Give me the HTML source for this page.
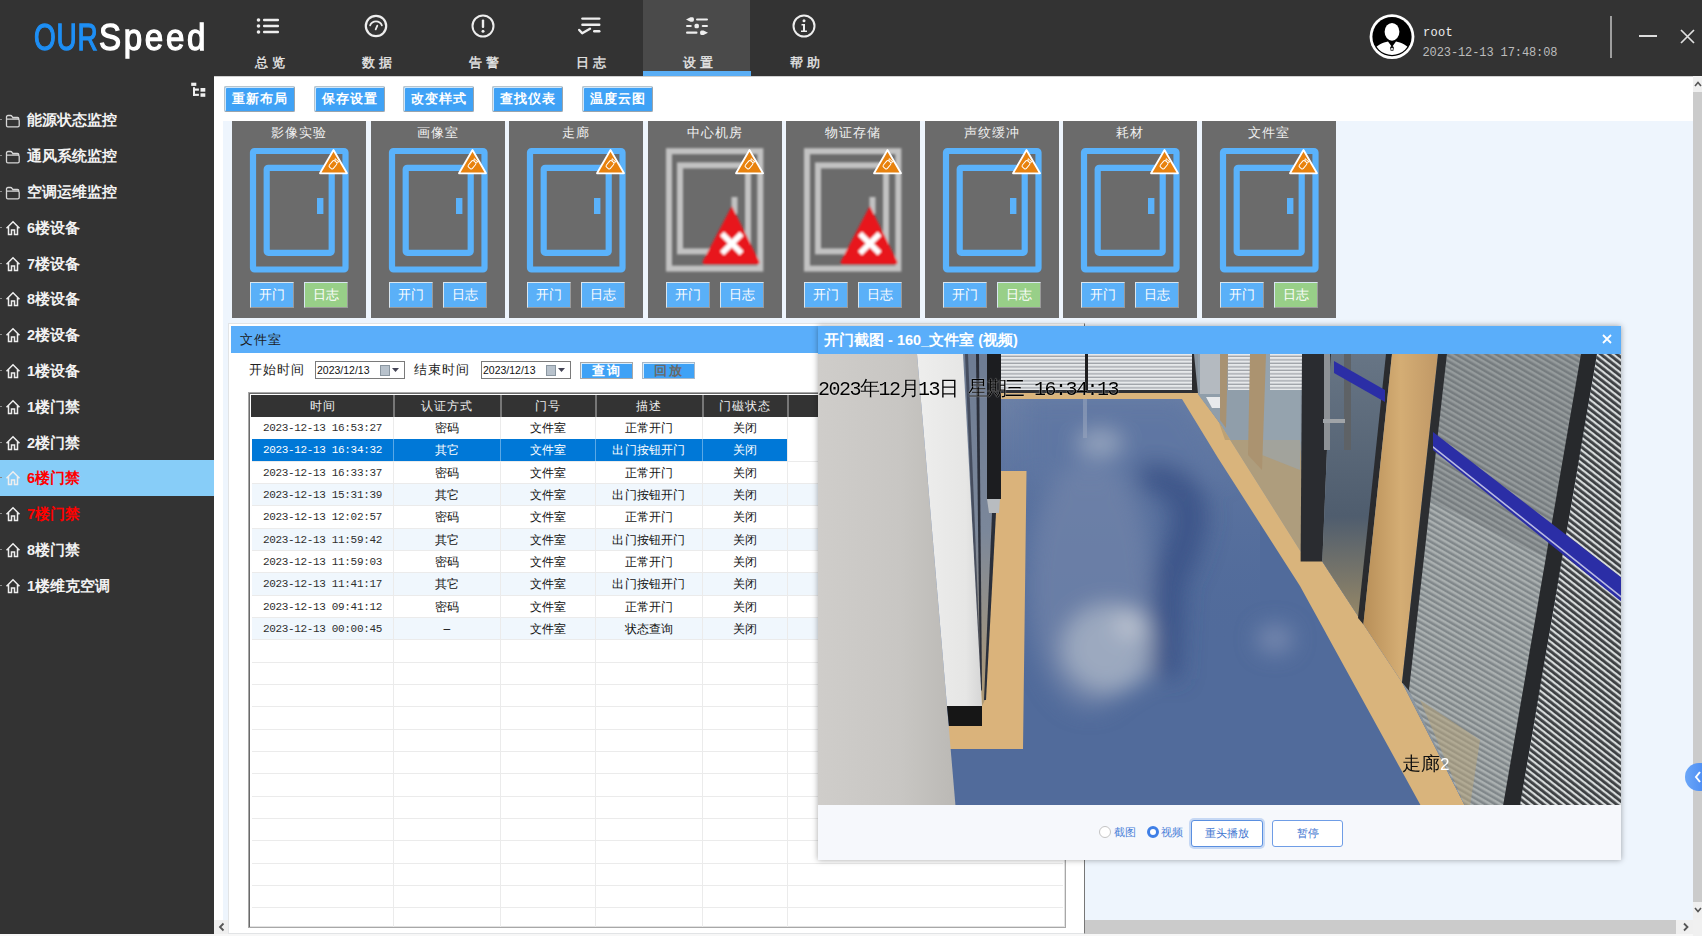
<!DOCTYPE html>
<html><head><meta charset="utf-8"><title>OURSpeed</title>
<style>
*{margin:0;padding:0;box-sizing:border-box}
html,body{width:1702px;height:936px;overflow:hidden;background:#fff;font-family:"Liberation Sans",sans-serif}
.ab{position:absolute}
.tab{position:absolute;top:0;width:107px;height:76px;color:#e8e8e8}
.tab .lb{position:absolute;left:0;width:107px;top:54.8px;text-align:center;font-size:13px;letter-spacing:4px;text-indent:4px;font-weight:normal;line-height:16px;-webkit-text-stroke:0.35px #e8e8e8}
.tab svg{position:absolute;left:40.3px;top:13px}
.side{position:absolute;left:0;width:214px;height:36px;color:#f2f2f2;font-size:14.5px;font-weight:bold;line-height:37px}
.side .tx{position:absolute;left:27px;top:0}
.tb{position:absolute;top:86px;width:71px;height:26px;background:#3fa2f6;border:1px solid #b8c4cc;border-right-color:#9aa4ac;border-bottom-color:#9aa4ac;box-shadow:inset 1px 1px 0 #cfe6fa;border-radius:2px;color:#fff;font-size:13px;font-weight:bold;text-align:center;line-height:24px;letter-spacing:1px}
.card{position:absolute;top:121px;width:134px;height:196.5px;background:#6b6b6b}
.card .ct{position:absolute;left:0;top:3.5px;width:134px;text-align:center;color:#f0f0f0;font-size:13px;letter-spacing:1px;line-height:16px}
.card svg{position:absolute;left:0;top:0}
.cb{position:absolute;top:161px;width:44px;height:26px;color:#fff;font-size:13px;line-height:24px;text-align:center;border:1px solid #d8e6f0;border-right-color:#9a9a9a;border-bottom-color:#9a9a9a}
.hd{position:absolute;top:395px;height:22px;color:#eee;font-size:12px;line-height:22px;text-align:center;letter-spacing:1px}
.row{position:absolute;left:252px;width:808px;height:22.33px}
.cell{position:absolute;top:0;height:22.33px;line-height:22px;text-align:center;font-size:12px;color:#111;letter-spacing:0.2px}
.mono{font-family:"Liberation Mono",monospace;letter-spacing:-0.35px;font-size:11px;color:#333}
</style></head><body>

<div class="ab" style="left:0;top:0;width:1702px;height:76px;background:#333"></div>
<div class="ab" style="left:34px;top:16.5px;font-size:37px;line-height:41px;white-space:nowrap;transform:scaleX(0.755);transform-origin:0 0;letter-spacing:1px;-webkit-text-stroke:1.3px currentColor;color:#1e8ff5">OUR</div>
<div class="ab" style="left:98.5px;top:16.5px;font-size:37px;line-height:41px;white-space:nowrap;transform:scaleX(0.895);transform-origin:0 0;letter-spacing:3px;-webkit-text-stroke:1.3px currentColor;color:#fff">Speed</div>
<div class="tab" style="left:216px;"><svg width="26" height="26" viewBox="0 0 26 26" style="margin-left:-1.5px;margin-top:2px"><g fill="#eee"><circle cx="3.5" cy="5" r="1.8"/><circle cx="3.5" cy="11" r="1.8"/><circle cx="3.5" cy="17" r="1.8"/><rect x="8" y="3.8" width="16" height="2.4" rx="1"/><rect x="8" y="9.8" width="16" height="2.4" rx="1"/><rect x="8" y="15.8" width="16" height="2.4" rx="1"/></g></svg><div class="lb">总览</div></div>
<div class="tab" style="left:323px;"><svg width="26" height="26" viewBox="0 0 26 26"><circle cx="13" cy="13" r="10.2" fill="none" stroke="#eee" stroke-width="2.2"/><path d="M7.1 12.4 A6.3 6.3 0 0 1 18.9 12.4" fill="none" stroke="#eee" stroke-width="1.7" stroke-linecap="round"/><path d="M14.3 12.6 L12.7 16.4" stroke="#eee" stroke-width="1.8" stroke-linecap="round"/></svg><div class="lb">数据</div></div>
<div class="tab" style="left:430px;"><svg width="26" height="26" viewBox="0 0 26 26"><circle cx="13" cy="13" r="10.5" fill="none" stroke="#eee" stroke-width="2"/><rect x="11.8" y="6.5" width="2.4" height="8.5" rx="1" fill="#eee"/><circle cx="13" cy="18.3" r="1.5" fill="#eee"/></svg><div class="lb">告警</div></div>
<div class="tab" style="left:537px;"><svg width="26" height="26" viewBox="0 0 26 26" style="margin-top:-1px"><g fill="#eee"><rect x="4.2" y="5.4" width="19.3" height="2.4" rx="1.2"/><rect x="4.2" y="11.5" width="19.3" height="2.4" rx="1.2"/><rect x="16" y="18.1" width="7.5" height="2.4" rx="1.2"/></g><path d="M2.2 18 L5.2 21.3 L13 16.8" fill="none" stroke="#eee" stroke-width="2.4" stroke-linecap="round" stroke-linejoin="round"/></svg><div class="lb">日志</div></div>
<div class="tab" style="left:644px;background:#4a4a4a;border-left:1px solid #4a4a4a;margin-left:-1px;"><svg width="26" height="26" viewBox="0 0 26 26"><g fill="#eee"><path d="M2 6.5 L6.5 4.3 L8.5 4.3 Q10 4.3 10 6.5 Q10 8.7 8.5 8.7 L6.5 8.7 Z"/><rect x="12" y="5.4" width="12" height="2.2" rx="1.1"/><rect x="2" y="11.9" width="5.8" height="2.2" rx="1.1"/><rect x="10.5" y="10.8" width="4.4" height="4.4" rx="1.5"/><rect x="17.7" y="11.9" width="6.3" height="2.2" rx="1.1"/><rect x="2" y="18.6" width="11.5" height="2.2" rx="1.1"/><path d="M24 19.7 L19.5 21.9 L17.5 21.9 Q16 21.9 16 19.7 Q16 17.5 17.5 17.5 L19.5 17.5 Z"/></g></svg><div class="lb">设置</div></div>
<div class="tab" style="left:751px;"><svg width="26" height="26" viewBox="0 0 26 26"><circle cx="13" cy="13" r="10.5" fill="none" stroke="#eee" stroke-width="2"/><circle cx="13" cy="7.8" r="1.5" fill="#eee"/><path d="M10.5 11 H14 V17.5 H16 V19 H10 V17.5 H12 V12.5 H10.5 Z" fill="#eee"/></svg><div class="lb">帮助</div></div>
<div class="ab" style="left:643px;top:71px;width:108px;height:5px;background:#5aaef5"></div>
<svg class="ab" style="left:1369px;top:14px" width="46" height="46" viewBox="0 0 46 46">
<circle cx="23" cy="22.7" r="22.4" fill="#fff"/><circle cx="23" cy="22.7" r="19.6" fill="#000"/>
<clipPath id="uc"><circle cx="23" cy="22.7" r="18.3"/></clipPath>
<g clip-path="url(#uc)" fill="#fff">
<ellipse cx="23" cy="17.8" rx="7.4" ry="8.9"/>
<path d="M4 46 L4 36 C8 31 14 28.5 19 27.5 L23 33 L27 27.5 C32 28.5 38 31 42 36 L42 46 Z"/>
</g>
<path d="M21.3 34.5 A1.8 1.8 0 1 1 24.7 34.5 L24.2 37 L21.8 37 Z" fill="#000"/>
<path d="M22.2 34.6 A0.8 0.8 0 1 1 23.8 34.6 L23.6 36.5 L22.4 36.5 Z" fill="#fff"/>
</svg>
<div class="ab mono" style="left:1423px;top:26px;font-size:12px;color:#eee;letter-spacing:0.3px">root</div>
<div class="ab mono" style="left:1422.5px;top:45.5px;font-size:12px;color:#bcbcbc;letter-spacing:-0.1px">2023-12-13 17:48:08</div>
<div class="ab" style="left:1610px;top:15.5px;width:2.2px;height:42px;background:#9e9e9e"></div>
<div class="ab" style="left:1639px;top:35px;width:18px;height:2px;background:#ddd"></div>
<svg class="ab" style="left:1680px;top:29px" width="15" height="15" viewBox="0 0 15 15"><path d="M1 1 L14 14 M14 1 L1 14" stroke="#e0e0e0" stroke-width="1.7"/></svg>
<div class="ab" style="left:214px;top:76px;width:1479px;height:1px;background:linear-gradient(#b8b8b8,#e8e8e8)"></div>
<div class="ab" style="left:0;top:76px;width:214px;height:858px;background:#333"></div>
<svg class="ab" style="left:190px;top:82px" width="17" height="17" viewBox="0 0 17 17"><g fill="#f0f0f0"><rect x="1.2" y="0.7" width="5.1" height="3.2"/><rect x="3" y="5.2" width="2" height="8.7"/><rect x="3" y="6.5" width="5.9" height="2.2"/><rect x="3" y="11.8" width="5.9" height="2.1"/><rect x="10.5" y="6" width="4.8" height="3.7"/><rect x="10.5" y="11.3" width="4.8" height="3.5"/></g></svg>
<div class="side" style="top:102.3px;"><div class="ab" style="left:0;top:17px;width:2px;height:1px;background:#888"></div><div class="ab" style="left:5px;top:12px;line-height:0"><svg width="16" height="14" viewBox="0 0 16 14"><path d="M1.5 3 Q1.5 1.5 3 1.5 H5.5 Q6.5 1.5 7.2 2.6 L7.8 3.5 H12.5 Q13.8 3.5 13.8 4.8 V5.2 M1.5 3 V11.5 Q1.5 12.8 2.8 12.8 H12.8 Q14.2 12.8 14.2 11.5 V6.5 Q14.2 5.2 12.8 5.2 H1.5" fill="none" stroke="#d6d6d6" stroke-width="1.3"/></svg></div><div class="tx">能源状态监控</div></div>
<div class="side" style="top:138.1px;"><div class="ab" style="left:0;top:17px;width:2px;height:1px;background:#888"></div><div class="ab" style="left:5px;top:12px;line-height:0"><svg width="16" height="14" viewBox="0 0 16 14"><path d="M1.5 3 Q1.5 1.5 3 1.5 H5.5 Q6.5 1.5 7.2 2.6 L7.8 3.5 H12.5 Q13.8 3.5 13.8 4.8 V5.2 M1.5 3 V11.5 Q1.5 12.8 2.8 12.8 H12.8 Q14.2 12.8 14.2 11.5 V6.5 Q14.2 5.2 12.8 5.2 H1.5" fill="none" stroke="#d6d6d6" stroke-width="1.3"/></svg></div><div class="tx">通风系统监控</div></div>
<div class="side" style="top:173.9px;"><div class="ab" style="left:0;top:17px;width:2px;height:1px;background:#888"></div><div class="ab" style="left:5px;top:12px;line-height:0"><svg width="16" height="14" viewBox="0 0 16 14"><path d="M1.5 3 Q1.5 1.5 3 1.5 H5.5 Q6.5 1.5 7.2 2.6 L7.8 3.5 H12.5 Q13.8 3.5 13.8 4.8 V5.2 M1.5 3 V11.5 Q1.5 12.8 2.8 12.8 H12.8 Q14.2 12.8 14.2 11.5 V6.5 Q14.2 5.2 12.8 5.2 H1.5" fill="none" stroke="#d6d6d6" stroke-width="1.3"/></svg></div><div class="tx">空调运维监控</div></div>
<div class="side" style="top:209.7px;"><div class="ab" style="left:0;top:17px;width:2px;height:1px;background:#888"></div><div class="ab" style="left:5px;top:10px;line-height:0"><svg width="16" height="16" viewBox="0 0 16 16"><path d="M1.5 8.2 L8 1.8 L14.5 8.2 M3.5 6.5 V14.5 H6.5 V10 H9.5 V14.5 H12.5 V6.5" fill="none" stroke="#eee" stroke-width="1.5" stroke-linejoin="miter"/></svg></div><div class="tx">6楼设备</div></div>
<div class="side" style="top:245.5px;"><div class="ab" style="left:0;top:17px;width:2px;height:1px;background:#888"></div><div class="ab" style="left:5px;top:10px;line-height:0"><svg width="16" height="16" viewBox="0 0 16 16"><path d="M1.5 8.2 L8 1.8 L14.5 8.2 M3.5 6.5 V14.5 H6.5 V10 H9.5 V14.5 H12.5 V6.5" fill="none" stroke="#eee" stroke-width="1.5" stroke-linejoin="miter"/></svg></div><div class="tx">7楼设备</div></div>
<div class="side" style="top:281.3px;"><div class="ab" style="left:0;top:17px;width:2px;height:1px;background:#888"></div><div class="ab" style="left:5px;top:10px;line-height:0"><svg width="16" height="16" viewBox="0 0 16 16"><path d="M1.5 8.2 L8 1.8 L14.5 8.2 M3.5 6.5 V14.5 H6.5 V10 H9.5 V14.5 H12.5 V6.5" fill="none" stroke="#eee" stroke-width="1.5" stroke-linejoin="miter"/></svg></div><div class="tx">8楼设备</div></div>
<div class="side" style="top:317.1px;"><div class="ab" style="left:0;top:17px;width:2px;height:1px;background:#888"></div><div class="ab" style="left:5px;top:10px;line-height:0"><svg width="16" height="16" viewBox="0 0 16 16"><path d="M1.5 8.2 L8 1.8 L14.5 8.2 M3.5 6.5 V14.5 H6.5 V10 H9.5 V14.5 H12.5 V6.5" fill="none" stroke="#eee" stroke-width="1.5" stroke-linejoin="miter"/></svg></div><div class="tx">2楼设备</div></div>
<div class="side" style="top:352.9px;"><div class="ab" style="left:0;top:17px;width:2px;height:1px;background:#888"></div><div class="ab" style="left:5px;top:10px;line-height:0"><svg width="16" height="16" viewBox="0 0 16 16"><path d="M1.5 8.2 L8 1.8 L14.5 8.2 M3.5 6.5 V14.5 H6.5 V10 H9.5 V14.5 H12.5 V6.5" fill="none" stroke="#eee" stroke-width="1.5" stroke-linejoin="miter"/></svg></div><div class="tx">1楼设备</div></div>
<div class="side" style="top:388.7px;"><div class="ab" style="left:0;top:17px;width:2px;height:1px;background:#888"></div><div class="ab" style="left:5px;top:10px;line-height:0"><svg width="16" height="16" viewBox="0 0 16 16"><path d="M1.5 8.2 L8 1.8 L14.5 8.2 M3.5 6.5 V14.5 H6.5 V10 H9.5 V14.5 H12.5 V6.5" fill="none" stroke="#eee" stroke-width="1.5" stroke-linejoin="miter"/></svg></div><div class="tx">1楼门禁</div></div>
<div class="side" style="top:424.5px;"><div class="ab" style="left:0;top:17px;width:2px;height:1px;background:#888"></div><div class="ab" style="left:5px;top:10px;line-height:0"><svg width="16" height="16" viewBox="0 0 16 16"><path d="M1.5 8.2 L8 1.8 L14.5 8.2 M3.5 6.5 V14.5 H6.5 V10 H9.5 V14.5 H12.5 V6.5" fill="none" stroke="#eee" stroke-width="1.5" stroke-linejoin="miter"/></svg></div><div class="tx">2楼门禁</div></div>
<div class="side" style="top:460.3px;background:#87cdf8;color:#ff0000;"><div class="ab" style="left:0;top:17px;width:2px;height:1px;background:#888"></div><div class="ab" style="left:5px;top:10px;line-height:0"><svg width="16" height="16" viewBox="0 0 16 16"><path d="M1.5 8.2 L8 1.8 L14.5 8.2 M3.5 6.5 V14.5 H6.5 V10 H9.5 V14.5 H12.5 V6.5" fill="none" stroke="#eee" stroke-width="1.5" stroke-linejoin="miter"/></svg></div><div class="tx">6楼门禁</div></div>
<div class="side" style="top:496.1px;color:#ff0000;"><div class="ab" style="left:0;top:17px;width:2px;height:1px;background:#888"></div><div class="ab" style="left:5px;top:10px;line-height:0"><svg width="16" height="16" viewBox="0 0 16 16"><path d="M1.5 8.2 L8 1.8 L14.5 8.2 M3.5 6.5 V14.5 H6.5 V10 H9.5 V14.5 H12.5 V6.5" fill="none" stroke="#eee" stroke-width="1.5" stroke-linejoin="miter"/></svg></div><div class="tx">7楼门禁</div></div>
<div class="side" style="top:531.9px;"><div class="ab" style="left:0;top:17px;width:2px;height:1px;background:#888"></div><div class="ab" style="left:5px;top:10px;line-height:0"><svg width="16" height="16" viewBox="0 0 16 16"><path d="M1.5 8.2 L8 1.8 L14.5 8.2 M3.5 6.5 V14.5 H6.5 V10 H9.5 V14.5 H12.5 V6.5" fill="none" stroke="#eee" stroke-width="1.5" stroke-linejoin="miter"/></svg></div><div class="tx">8楼门禁</div></div>
<div class="side" style="top:567.7px;"><div class="ab" style="left:0;top:17px;width:2px;height:1px;background:#888"></div><div class="ab" style="left:5px;top:10px;line-height:0"><svg width="16" height="16" viewBox="0 0 16 16"><path d="M1.5 8.2 L8 1.8 L14.5 8.2 M3.5 6.5 V14.5 H6.5 V10 H9.5 V14.5 H12.5 V6.5" fill="none" stroke="#eee" stroke-width="1.5" stroke-linejoin="miter"/></svg></div><div class="tx">1楼维克空调</div></div>
<div class="ab" style="left:223px;top:121px;width:1470px;height:799px;background:#eef5fd"></div>
<div class="tb" style="left:224px">重新布局</div>
<div class="tb" style="left:314px">保存设置</div>
<div class="tb" style="left:403px">改变样式</div>
<div class="tb" style="left:492px">查找仪表</div>
<div class="tb" style="left:582px">温度云图</div>
<div class="card" style="left:232px"><svg width="134" height="197" viewBox="0 0 134 197"><rect x="21" y="30" width="92.5" height="118.5" rx="1.5" fill="none" stroke="#5ab2fb" stroke-width="6.2"/><rect x="34.7" y="46.8" width="65" height="85" rx="1.5" fill="none" stroke="#5ab2fb" stroke-width="6.2"/><rect x="85" y="77" width="6.4" height="16" fill="#5ab2fb"/><path d="M101.5 29 L115 52.3 L88 52.3 Z" fill="#e8820e" stroke="#fff" stroke-width="1.8" stroke-linejoin="round"/><g transform="translate(101.5,43.5) rotate(-50)"><rect x="-4.5" y="-2.8" width="8" height="5.2" rx="1.5" fill="none" stroke="#fff" stroke-width="1"/><path d="M3.5 -1 L5.5 -2.5 L5.5 2.5 L3.5 1" fill="none" stroke="#fff" stroke-width="0.9"/></g></svg><div class="ct">影像实验</div>
<div class="cb" style="left:18px;background:#5ab0f8">开门</div>
<div class="cb" style="left:72px;background:#98cf88">日志</div></div>
<div class="card" style="left:371px"><svg width="134" height="197" viewBox="0 0 134 197"><rect x="21" y="30" width="92.5" height="118.5" rx="1.5" fill="none" stroke="#5ab2fb" stroke-width="6.2"/><rect x="34.7" y="46.8" width="65" height="85" rx="1.5" fill="none" stroke="#5ab2fb" stroke-width="6.2"/><rect x="85" y="77" width="6.4" height="16" fill="#5ab2fb"/><path d="M101.5 29 L115 52.3 L88 52.3 Z" fill="#e8820e" stroke="#fff" stroke-width="1.8" stroke-linejoin="round"/><g transform="translate(101.5,43.5) rotate(-50)"><rect x="-4.5" y="-2.8" width="8" height="5.2" rx="1.5" fill="none" stroke="#fff" stroke-width="1"/><path d="M3.5 -1 L5.5 -2.5 L5.5 2.5 L3.5 1" fill="none" stroke="#fff" stroke-width="0.9"/></g></svg><div class="ct">画像室</div>
<div class="cb" style="left:18px;background:#5ab0f8">开门</div>
<div class="cb" style="left:72px;background:#5ab0f8">日志</div></div>
<div class="card" style="left:509px"><svg width="134" height="197" viewBox="0 0 134 197"><rect x="21" y="30" width="92.5" height="118.5" rx="1.5" fill="none" stroke="#5ab2fb" stroke-width="6.2"/><rect x="34.7" y="46.8" width="65" height="85" rx="1.5" fill="none" stroke="#5ab2fb" stroke-width="6.2"/><rect x="85" y="77" width="6.4" height="16" fill="#5ab2fb"/><path d="M101.5 29 L115 52.3 L88 52.3 Z" fill="#e8820e" stroke="#fff" stroke-width="1.8" stroke-linejoin="round"/><g transform="translate(101.5,43.5) rotate(-50)"><rect x="-4.5" y="-2.8" width="8" height="5.2" rx="1.5" fill="none" stroke="#fff" stroke-width="1"/><path d="M3.5 -1 L5.5 -2.5 L5.5 2.5 L3.5 1" fill="none" stroke="#fff" stroke-width="0.9"/></g></svg><div class="ct">走廊</div>
<div class="cb" style="left:18px;background:#5ab0f8">开门</div>
<div class="cb" style="left:72px;background:#5ab0f8">日志</div></div>
<div class="card" style="left:648px"><svg width="134" height="197" viewBox="0 0 134 197"><defs><filter id="soft" x="-20%" y="-20%" width="140%" height="140%"><feGaussianBlur stdDeviation="0.9"/></filter></defs><g filter="url(#soft)"><rect x="21" y="30.2" width="91.3" height="117.4" fill="none" stroke="#c2c2c2" stroke-width="6"/><rect x="32" y="44.4" width="68" height="86" fill="none" stroke="#c2c2c2" stroke-width="6"/><rect x="83.5" y="76" width="6" height="17" fill="#c2c2c2"/><path d="M83.8 85 L111 140 Q112.5 143.5 109 143.5 L57 143.5 Q53.5 143.5 55 140 Z" fill="#e8191f"/><path d="M74 112.7 L93.6 132.3 M93.6 112.7 L74 132.3" stroke="#fff" stroke-width="5.5"/></g><path d="M101.5 29 L115 52.3 L88 52.3 Z" fill="#e8820e" stroke="#fff" stroke-width="1.8" stroke-linejoin="round"/><g transform="translate(101.5,43.5) rotate(-50)"><rect x="-4.5" y="-2.8" width="8" height="5.2" rx="1.5" fill="none" stroke="#fff" stroke-width="1"/><path d="M3.5 -1 L5.5 -2.5 L5.5 2.5 L3.5 1" fill="none" stroke="#fff" stroke-width="0.9"/></g></svg><div class="ct">中心机房</div>
<div class="cb" style="left:18px;background:#5ab0f8">开门</div>
<div class="cb" style="left:72px;background:#5ab0f8">日志</div></div>
<div class="card" style="left:786px"><svg width="134" height="197" viewBox="0 0 134 197"><defs><filter id="soft" x="-20%" y="-20%" width="140%" height="140%"><feGaussianBlur stdDeviation="0.9"/></filter></defs><g filter="url(#soft)"><rect x="21" y="30.2" width="91.3" height="117.4" fill="none" stroke="#c2c2c2" stroke-width="6"/><rect x="32" y="44.4" width="68" height="86" fill="none" stroke="#c2c2c2" stroke-width="6"/><rect x="83.5" y="76" width="6" height="17" fill="#c2c2c2"/><path d="M83.8 85 L111 140 Q112.5 143.5 109 143.5 L57 143.5 Q53.5 143.5 55 140 Z" fill="#e8191f"/><path d="M74 112.7 L93.6 132.3 M93.6 112.7 L74 132.3" stroke="#fff" stroke-width="5.5"/></g><path d="M101.5 29 L115 52.3 L88 52.3 Z" fill="#e8820e" stroke="#fff" stroke-width="1.8" stroke-linejoin="round"/><g transform="translate(101.5,43.5) rotate(-50)"><rect x="-4.5" y="-2.8" width="8" height="5.2" rx="1.5" fill="none" stroke="#fff" stroke-width="1"/><path d="M3.5 -1 L5.5 -2.5 L5.5 2.5 L3.5 1" fill="none" stroke="#fff" stroke-width="0.9"/></g></svg><div class="ct">物证存储</div>
<div class="cb" style="left:18px;background:#5ab0f8">开门</div>
<div class="cb" style="left:72px;background:#5ab0f8">日志</div></div>
<div class="card" style="left:925px"><svg width="134" height="197" viewBox="0 0 134 197"><rect x="21" y="30" width="92.5" height="118.5" rx="1.5" fill="none" stroke="#5ab2fb" stroke-width="6.2"/><rect x="34.7" y="46.8" width="65" height="85" rx="1.5" fill="none" stroke="#5ab2fb" stroke-width="6.2"/><rect x="85" y="77" width="6.4" height="16" fill="#5ab2fb"/><path d="M101.5 29 L115 52.3 L88 52.3 Z" fill="#e8820e" stroke="#fff" stroke-width="1.8" stroke-linejoin="round"/><g transform="translate(101.5,43.5) rotate(-50)"><rect x="-4.5" y="-2.8" width="8" height="5.2" rx="1.5" fill="none" stroke="#fff" stroke-width="1"/><path d="M3.5 -1 L5.5 -2.5 L5.5 2.5 L3.5 1" fill="none" stroke="#fff" stroke-width="0.9"/></g></svg><div class="ct">声纹缓冲</div>
<div class="cb" style="left:18px;background:#5ab0f8">开门</div>
<div class="cb" style="left:72px;background:#98cf88">日志</div></div>
<div class="card" style="left:1063px"><svg width="134" height="197" viewBox="0 0 134 197"><rect x="21" y="30" width="92.5" height="118.5" rx="1.5" fill="none" stroke="#5ab2fb" stroke-width="6.2"/><rect x="34.7" y="46.8" width="65" height="85" rx="1.5" fill="none" stroke="#5ab2fb" stroke-width="6.2"/><rect x="85" y="77" width="6.4" height="16" fill="#5ab2fb"/><path d="M101.5 29 L115 52.3 L88 52.3 Z" fill="#e8820e" stroke="#fff" stroke-width="1.8" stroke-linejoin="round"/><g transform="translate(101.5,43.5) rotate(-50)"><rect x="-4.5" y="-2.8" width="8" height="5.2" rx="1.5" fill="none" stroke="#fff" stroke-width="1"/><path d="M3.5 -1 L5.5 -2.5 L5.5 2.5 L3.5 1" fill="none" stroke="#fff" stroke-width="0.9"/></g></svg><div class="ct">耗材</div>
<div class="cb" style="left:18px;background:#5ab0f8">开门</div>
<div class="cb" style="left:72px;background:#5ab0f8">日志</div></div>
<div class="card" style="left:1202px"><svg width="134" height="197" viewBox="0 0 134 197"><rect x="21" y="30" width="92.5" height="118.5" rx="1.5" fill="none" stroke="#5ab2fb" stroke-width="6.2"/><rect x="34.7" y="46.8" width="65" height="85" rx="1.5" fill="none" stroke="#5ab2fb" stroke-width="6.2"/><rect x="85" y="77" width="6.4" height="16" fill="#5ab2fb"/><path d="M101.5 29 L115 52.3 L88 52.3 Z" fill="#e8820e" stroke="#fff" stroke-width="1.8" stroke-linejoin="round"/><g transform="translate(101.5,43.5) rotate(-50)"><rect x="-4.5" y="-2.8" width="8" height="5.2" rx="1.5" fill="none" stroke="#fff" stroke-width="1"/><path d="M3.5 -1 L5.5 -2.5 L5.5 2.5 L3.5 1" fill="none" stroke="#fff" stroke-width="0.9"/></g></svg><div class="ct">文件室</div>
<div class="cb" style="left:18px;background:#5ab0f8">开门</div>
<div class="cb" style="left:72px;background:#98cf88">日志</div></div>
<div class="ab" style="left:1693px;top:76px;width:9px;height:858px;background:#cbcbcb"></div>
<div class="ab" style="left:1693px;top:76px;width:9px;height:16px;background:#efefef"></div>
<svg class="ab" style="left:1694px;top:80px" width="8" height="8"><path d="M1 6 L4 2.5 L7 6" fill="none" stroke="#555" stroke-width="1.6"/></svg>
<div class="ab" style="left:1693px;top:902px;width:9px;height:18px;background:#efefef"></div>
<svg class="ab" style="left:1694px;top:906px" width="8" height="8"><path d="M1 2 L4 5.5 L7 2" fill="none" stroke="#555" stroke-width="1.6"/></svg>
<div class="ab" style="left:214px;top:920px;width:1479px;height:14px;background:#cbcbcb"></div>
<div class="ab" style="left:214px;top:920px;width:15px;height:14px;background:#efefef"></div>
<svg class="ab" style="left:217px;top:922px" width="10" height="10"><path d="M6.5 1.5 L3 5 L6.5 8.5" fill="none" stroke="#555" stroke-width="1.8"/></svg>
<div class="ab" style="left:1676px;top:920px;width:17px;height:14px;background:#efefef"></div>
<svg class="ab" style="left:1681px;top:922px" width="10" height="10"><path d="M3 1.5 L6.5 5 L3 8.5" fill="none" stroke="#555" stroke-width="1.8"/></svg>
<div class="ab" style="left:0;top:934px;width:1702px;height:2px;background:#f7f7f7"></div>
<div class="ab" style="left:1693px;top:918px;width:9px;height:18px;background:#f0f0f0"></div>
<div class="ab" style="left:1685px;top:763px;width:30px;height:28px;border-radius:14px;background:linear-gradient(90deg,#6aa6f8,#3c7ff0)"></div>
<svg class="ab" style="left:1693px;top:770px" width="10" height="14"><path d="M7 2 L3 7 L7 12" fill="none" stroke="#fff" stroke-width="2"/></svg>
<div class="ab" style="left:228px;top:323px;width:857px;height:611px;background:#fff;border:1px solid #e2e4e6;border-right:1px solid #777"></div>
<div class="ab" style="left:231px;top:326px;width:854px;height:27px;background:#5aaefa"></div>
<div class="ab" style="left:240px;top:331px;font-size:13px;color:#1a1a1a;line-height:17px;letter-spacing:1px">文件室</div>
<div class="ab" style="left:249px;top:362px;font-size:13px;color:#222;line-height:16px;letter-spacing:1px">开始时间</div>
<div class="ab" style="left:414px;top:362px;font-size:13px;color:#222;line-height:16px;letter-spacing:1px">结束时间</div>
<div class="ab" style="left:315px;top:361px;width:90px;height:18px;border:1px solid #7a7a7a;background:#fff"><div class="ab" style="left:1px;top:1px;font-size:10.5px;line-height:14px;color:#111">2023/12/13</div><div class="ab" style="left:64px;top:3px;width:10px;height:11px;background:#b8c2cc;border:1px solid #8a96a0"></div><svg class="ab" style="left:76px;top:6px" width="7" height="5"><path d="M0 0 H7 L3.5 4 Z" fill="#445"/></svg></div>
<div class="ab" style="left:481px;top:361px;width:90px;height:18px;border:1px solid #7a7a7a;background:#fff"><div class="ab" style="left:1px;top:1px;font-size:10.5px;line-height:14px;color:#111">2023/12/13</div><div class="ab" style="left:64px;top:3px;width:10px;height:11px;background:#b8c2cc;border:1px solid #8a96a0"></div><svg class="ab" style="left:76px;top:6px" width="7" height="5"><path d="M0 0 H7 L3.5 4 Z" fill="#445"/></svg></div>
<div class="ab" style="left:580px;top:362px;width:53px;height:17px;background:#3fa2f6;border:1px solid #a8a8a8;box-shadow:inset 1px 1px 0 #d6ecfc;color:#fff;font-size:13px;font-weight:bold;line-height:15px;text-align:center;letter-spacing:2px">查询</div>
<div class="ab" style="left:642px;top:362px;width:53px;height:17px;background:#3fa2f6;border:1px solid #a8b8c8;box-shadow:inset 1px 1px 0 #d6ecfc;color:#6a6a6a;font-size:13px;font-weight:bold;line-height:15px;text-align:center;letter-spacing:2px">回放</div>
<div class="ab" style="left:248px;top:392px;width:818px;height:536px;border:1px solid #a8a8a8;background:#fff;box-shadow:inset 1px 1px 0 #6a6a6a, inset -1px -1px 0 #e2e2e2"></div>
<div class="ab" style="left:251px;top:395px;width:812px;height:22px;background:#333"></div>
<div class="hd" style="left:252px;width:141px">时间</div>
<div class="ab" style="left:393px;top:395px;width:2px;height:22px;background:#777"></div>
<div class="hd" style="left:394px;width:106px">认证方式</div>
<div class="ab" style="left:500px;top:395px;width:2px;height:22px;background:#777"></div>
<div class="hd" style="left:501px;width:94px">门号</div>
<div class="ab" style="left:595px;top:395px;width:2px;height:22px;background:#777"></div>
<div class="hd" style="left:596px;width:106px">描述</div>
<div class="ab" style="left:702px;top:395px;width:2px;height:22px;background:#777"></div>
<div class="hd" style="left:703px;width:84px">门磁状态</div>
<div class="ab" style="left:787px;top:395px;width:2px;height:22px;background:#777"></div>
<div class="hd" style="left:788px;width:275px"></div>
<div class="ab" style="left:252px;top:417.00px;width:811px;height:22.33px;background:#fff"></div>
<div class="ab" style="left:252px;top:438.50px;width:811px;height:1px;background:#ebebeb"></div>
<div class="ab" style="left:252px;top:439.33px;width:811px;height:22.33px;background:#fff"></div>
<div class="ab" style="left:252px;top:460.83px;width:811px;height:1px;background:#ebebeb"></div>
<div class="ab" style="left:252px;top:461.66px;width:811px;height:22.33px;background:#fff"></div>
<div class="ab" style="left:252px;top:483.16px;width:811px;height:1px;background:#ebebeb"></div>
<div class="ab" style="left:252px;top:483.99px;width:811px;height:22.33px;background:#f0f7fd"></div>
<div class="ab" style="left:252px;top:505.49px;width:811px;height:1px;background:#ebebeb"></div>
<div class="ab" style="left:252px;top:506.32px;width:811px;height:22.33px;background:#fff"></div>
<div class="ab" style="left:252px;top:527.82px;width:811px;height:1px;background:#ebebeb"></div>
<div class="ab" style="left:252px;top:528.65px;width:811px;height:22.33px;background:#f0f7fd"></div>
<div class="ab" style="left:252px;top:550.15px;width:811px;height:1px;background:#ebebeb"></div>
<div class="ab" style="left:252px;top:550.98px;width:811px;height:22.33px;background:#fff"></div>
<div class="ab" style="left:252px;top:572.48px;width:811px;height:1px;background:#ebebeb"></div>
<div class="ab" style="left:252px;top:573.31px;width:811px;height:22.33px;background:#f0f7fd"></div>
<div class="ab" style="left:252px;top:594.81px;width:811px;height:1px;background:#ebebeb"></div>
<div class="ab" style="left:252px;top:595.64px;width:811px;height:22.33px;background:#fff"></div>
<div class="ab" style="left:252px;top:617.14px;width:811px;height:1px;background:#ebebeb"></div>
<div class="ab" style="left:252px;top:617.97px;width:811px;height:22.33px;background:#f0f7fd"></div>
<div class="ab" style="left:252px;top:639.47px;width:811px;height:1px;background:#ebebeb"></div>
<div class="ab" style="left:252px;top:661.80px;width:811px;height:1px;background:#ebebeb"></div>
<div class="ab" style="left:252px;top:684.13px;width:811px;height:1px;background:#ebebeb"></div>
<div class="ab" style="left:252px;top:706.46px;width:811px;height:1px;background:#ebebeb"></div>
<div class="ab" style="left:252px;top:728.79px;width:811px;height:1px;background:#ebebeb"></div>
<div class="ab" style="left:252px;top:751.12px;width:811px;height:1px;background:#ebebeb"></div>
<div class="ab" style="left:252px;top:773.45px;width:811px;height:1px;background:#ebebeb"></div>
<div class="ab" style="left:252px;top:795.78px;width:811px;height:1px;background:#ebebeb"></div>
<div class="ab" style="left:252px;top:818.11px;width:811px;height:1px;background:#ebebeb"></div>
<div class="ab" style="left:252px;top:840.44px;width:811px;height:1px;background:#ebebeb"></div>
<div class="ab" style="left:252px;top:862.77px;width:811px;height:1px;background:#ebebeb"></div>
<div class="ab" style="left:252px;top:885.10px;width:811px;height:1px;background:#ebebeb"></div>
<div class="ab" style="left:252px;top:907.43px;width:811px;height:1px;background:#ebebeb"></div>
<div class="ab" style="left:393px;top:417px;width:1px;height:510px;background:#ebebeb"></div>
<div class="ab" style="left:500px;top:417px;width:1px;height:510px;background:#ebebeb"></div>
<div class="ab" style="left:595px;top:417px;width:1px;height:510px;background:#ebebeb"></div>
<div class="ab" style="left:702px;top:417px;width:1px;height:510px;background:#ebebeb"></div>
<div class="ab" style="left:787px;top:417px;width:1px;height:510px;background:#ebebeb"></div>
<div class="ab" style="left:252px;top:439.3px;width:535px;height:21.5px;background:#0078d7"></div>
<div class="ab" style="left:393px;top:439.3px;width:1px;height:21.5px;background:#5aa8e6"></div>
<div class="ab" style="left:500px;top:439.3px;width:1px;height:21.5px;background:#5aa8e6"></div>
<div class="ab" style="left:595px;top:439.3px;width:1px;height:21.5px;background:#5aa8e6"></div>
<div class="ab" style="left:702px;top:439.3px;width:1px;height:21.5px;background:#5aa8e6"></div>
<div class="cell mono" style="left:252px;width:141px;top:417.00px;color:#2e2e2e">2023-12-13 16:53:27</div>
<div class="cell" style="left:394px;width:106px;top:417.00px;color:#111">密码</div>
<div class="cell" style="left:501px;width:94px;top:417.00px;color:#111">文件室</div>
<div class="cell" style="left:596px;width:106px;top:417.00px;color:#111">正常开门</div>
<div class="cell" style="left:703px;width:84px;top:417.00px;color:#111">关闭</div>
<div class="cell mono" style="left:252px;width:141px;top:439.33px;color:#fff">2023-12-13 16:34:32</div>
<div class="cell" style="left:394px;width:106px;top:439.33px;color:#fff">其它</div>
<div class="cell" style="left:501px;width:94px;top:439.33px;color:#fff">文件室</div>
<div class="cell" style="left:596px;width:106px;top:439.33px;color:#fff">出门按钮开门</div>
<div class="cell" style="left:703px;width:84px;top:439.33px;color:#fff">关闭</div>
<div class="cell mono" style="left:252px;width:141px;top:461.66px;color:#2e2e2e">2023-12-13 16:33:37</div>
<div class="cell" style="left:394px;width:106px;top:461.66px;color:#111">密码</div>
<div class="cell" style="left:501px;width:94px;top:461.66px;color:#111">文件室</div>
<div class="cell" style="left:596px;width:106px;top:461.66px;color:#111">正常开门</div>
<div class="cell" style="left:703px;width:84px;top:461.66px;color:#111">关闭</div>
<div class="cell mono" style="left:252px;width:141px;top:483.99px;color:#2e2e2e">2023-12-13 15:31:39</div>
<div class="cell" style="left:394px;width:106px;top:483.99px;color:#111">其它</div>
<div class="cell" style="left:501px;width:94px;top:483.99px;color:#111">文件室</div>
<div class="cell" style="left:596px;width:106px;top:483.99px;color:#111">出门按钮开门</div>
<div class="cell" style="left:703px;width:84px;top:483.99px;color:#111">关闭</div>
<div class="cell mono" style="left:252px;width:141px;top:506.32px;color:#2e2e2e">2023-12-13 12:02:57</div>
<div class="cell" style="left:394px;width:106px;top:506.32px;color:#111">密码</div>
<div class="cell" style="left:501px;width:94px;top:506.32px;color:#111">文件室</div>
<div class="cell" style="left:596px;width:106px;top:506.32px;color:#111">正常开门</div>
<div class="cell" style="left:703px;width:84px;top:506.32px;color:#111">关闭</div>
<div class="cell mono" style="left:252px;width:141px;top:528.65px;color:#2e2e2e">2023-12-13 11:59:42</div>
<div class="cell" style="left:394px;width:106px;top:528.65px;color:#111">其它</div>
<div class="cell" style="left:501px;width:94px;top:528.65px;color:#111">文件室</div>
<div class="cell" style="left:596px;width:106px;top:528.65px;color:#111">出门按钮开门</div>
<div class="cell" style="left:703px;width:84px;top:528.65px;color:#111">关闭</div>
<div class="cell mono" style="left:252px;width:141px;top:550.98px;color:#2e2e2e">2023-12-13 11:59:03</div>
<div class="cell" style="left:394px;width:106px;top:550.98px;color:#111">密码</div>
<div class="cell" style="left:501px;width:94px;top:550.98px;color:#111">文件室</div>
<div class="cell" style="left:596px;width:106px;top:550.98px;color:#111">正常开门</div>
<div class="cell" style="left:703px;width:84px;top:550.98px;color:#111">关闭</div>
<div class="cell mono" style="left:252px;width:141px;top:573.31px;color:#2e2e2e">2023-12-13 11:41:17</div>
<div class="cell" style="left:394px;width:106px;top:573.31px;color:#111">其它</div>
<div class="cell" style="left:501px;width:94px;top:573.31px;color:#111">文件室</div>
<div class="cell" style="left:596px;width:106px;top:573.31px;color:#111">出门按钮开门</div>
<div class="cell" style="left:703px;width:84px;top:573.31px;color:#111">关闭</div>
<div class="cell mono" style="left:252px;width:141px;top:595.64px;color:#2e2e2e">2023-12-13 09:41:12</div>
<div class="cell" style="left:394px;width:106px;top:595.64px;color:#111">密码</div>
<div class="cell" style="left:501px;width:94px;top:595.64px;color:#111">文件室</div>
<div class="cell" style="left:596px;width:106px;top:595.64px;color:#111">正常开门</div>
<div class="cell" style="left:703px;width:84px;top:595.64px;color:#111">关闭</div>
<div class="cell mono" style="left:252px;width:141px;top:617.97px;color:#2e2e2e">2023-12-13 00:00:45</div>
<div class="cell" style="left:394px;width:106px;top:617.97px;color:#111">–</div>
<div class="cell" style="left:501px;width:94px;top:617.97px;color:#111">文件室</div>
<div class="cell" style="left:596px;width:106px;top:617.97px;color:#111">状态查询</div>
<div class="cell" style="left:703px;width:84px;top:617.97px;color:#111">关闭</div>
<div class="ab" style="left:818px;top:326px;width:803px;height:534px;background:#f6f8fc;box-shadow:0 0 6px rgba(0,0,0,0.35)"></div>
<div class="ab" style="left:818px;top:326px;width:803px;height:28px;background:#5aaefa"></div>
<div class="ab" style="left:824px;top:331px;font-size:14.5px;font-weight:bold;color:#fff;line-height:18px;white-space:nowrap">开门截图 - 160_文件室 (视频)</div>
<svg class="ab" style="left:1602px;top:334px" width="10" height="10"><path d="M1 1 L9 9 M9 1 L1 9" stroke="#fff" stroke-width="1.8"/></svg>
<svg class="ab" style="left:818px;top:354px" width="803" height="451" viewBox="818 354 803 451">
<defs>
<filter id="bl8" x="-50%" y="-50%" width="200%" height="200%"><feGaussianBlur stdDeviation="11"/></filter>
<filter id="bl3" x="-50%" y="-50%" width="200%" height="200%"><feGaussianBlur stdDeviation="3"/></filter>
<filter id="bl1"><feGaussianBlur stdDeviation="0.7"/></filter>
<linearGradient id="wall" x1="0" x2="1" y1="0" y2="0"><stop offset="0" stop-color="#cfcdca"/><stop offset="0.6" stop-color="#c8c6c3"/><stop offset="1" stop-color="#bbb9b5"/></linearGradient>
<linearGradient id="pil" x1="0" x2="1"><stop offset="0" stop-color="#eeeeed"/><stop offset="0.75" stop-color="#e6e6e5"/><stop offset="1" stop-color="#d6d6d6"/></linearGradient>
<linearGradient id="floorTop" x1="0" x2="0" y1="0" y2="1"><stop offset="0" stop-color="#6f83a8" stop-opacity="0.9"/><stop offset="0.4" stop-color="#6a7fa6" stop-opacity="0.35"/><stop offset="1" stop-color="#4f6997" stop-opacity="0"/></linearGradient>
<linearGradient id="wood" x1="0" x2="1"><stop offset="0" stop-color="#b88f58"/><stop offset="0.5" stop-color="#d4ad74"/><stop offset="1" stop-color="#c09866"/></linearGradient>
<linearGradient id="glassL" x1="0" x2="0" y1="0" y2="1"><stop offset="0" stop-color="#6e7c93"/><stop offset="0.5" stop-color="#7b879a"/><stop offset="1" stop-color="#b09a74"/></linearGradient>
<linearGradient id="door" x1="0" x2="0" y1="0" y2="1"><stop offset="0" stop-color="#677585"/><stop offset="0.6" stop-color="#4f5d6e"/><stop offset="1" stop-color="#9a8a66"/></linearGradient>
<pattern id="blinds" width="5" height="5" patternUnits="userSpaceOnUse" patternTransform="rotate(30)"><rect width="5" height="5" fill="#80878a"/><rect width="5" height="2.5" fill="#aab0b0"/></pattern>
<pattern id="blinds2" width="5" height="5" patternUnits="userSpaceOnUse" patternTransform="rotate(38)"><rect width="5" height="5" fill="#3c3f42"/><rect width="5" height="2.2" fill="#d6dada"/></pattern>
<pattern id="blindsTop" width="4" height="3.5" patternUnits="userSpaceOnUse"><rect width="4" height="3.5" fill="#9ea2a8"/><rect width="4" height="2.2" fill="#e6e8ea"/></pattern>
</defs>
<rect x="818" y="354" width="803" height="451" fill="#516b9b"/>
<rect x="960" y="396" width="300" height="250" fill="url(#floorTop)"/>
<!-- floor reflections -->
<g filter="url(#bl8)">
<path d="M1026 398 L1183 398 L1230 478 L1026 478 Z" fill="#5f77a3" opacity="0.8"/>
<ellipse cx="1090" cy="585" rx="62" ry="125" fill="#7284aa" opacity="0.75"/>
<ellipse cx="1110" cy="648" rx="48" ry="44" fill="#aeb7c7" opacity="0.75"/>
<ellipse cx="1130" cy="625" rx="14" ry="12" fill="#d0d4dc" opacity="0.7"/>
<ellipse cx="1100" cy="443" rx="22" ry="12" fill="#a8b4c8" opacity="0.8"/>
<path d="M1140 462 Q1205 458 1208 520 Q1200 560 1185 585 L1180 680 L1150 672 L1155 570 Q1170 540 1172 512 Q1160 492 1138 486 Z" fill="#3b5286" opacity="0.85"/>
<ellipse cx="1275" cy="639" rx="18" ry="14" fill="#8797b8" opacity="0.7"/>
</g>
<rect x="1083" y="398" width="4" height="40" fill="#96a4bd" opacity="0.6" filter="url(#bl1)"/>
<!-- top blinds -->
<rect x="999" y="354" width="196" height="39" fill="url(#blindsTop)"/>
<rect x="1085" y="354" width="3" height="39" fill="#1e1e20"/>
<rect x="999" y="390" width="196" height="4" fill="#2d2f34"/>
<rect x="1192" y="354" width="8" height="40" fill="#2a2b2e"/>
<!-- tan floor border -->
<path d="M963 393 L1198 393 L1218.6 421.6 L1322.3 561.5 L1363.4 624.3 L1402 682.2 L1465 806 L1421 806 L1300 586 L1218 458 L1182 399 L963 399 Z" fill="#d9b47c"/>
<path d="M978 471 L1026.5 471 L1023 749 L948 749 L946 726 L978 726 Z" fill="#dab37b"/>
<!-- grey wall -->
<path d="M818 354 L917 354 L955.5 806 L818 806 Z" fill="url(#wall)"/>
<!-- glass between pillar and strip -->
<path d="M962 354 L1001 354 L992 520 L985 700 L982 706 Z" fill="url(#glassL)"/>
<path d="M976 354 L979 354 L982 690 L980 692 Z" fill="#2b2f3a"/>
<path d="M965 354 L968 354 L981 680 L979 682 Z" fill="#3a4050" opacity="0.8"/>
<rect x="987" y="354" width="14" height="145" fill="#1c1d20"/>
<path d="M987 499 L1000 499 L999 513 L989 513 Z" fill="#b8bcc0"/>
<path d="M992 513 L996 513 L986 700 L984 700 Z" fill="#2a2f3a"/>
<!-- white pillar -->
<path d="M917 354 L963 354 L982 706 L947 706 Z" fill="url(#pil)"/>
<path d="M947 706 L982 706 L982 726 L949 726 Z" fill="#161616"/>
<!-- right glass wall -->
<path d="M1194 354 L1621 354 L1621 806 L1465 806 L1402 682.2 L1363.4 624.3 L1322.3 561.5 L1218.6 421.6 L1198 394 Z" fill="#8b96a0"/>
<path d="M1198 354 L1307 354 L1307 561.5 L1218.6 421.6 L1198 394 Z" fill="#909eaa"/>
<rect x="1200" y="354" width="20" height="40" fill="#b4bac0"/>
<path d="M1206 397 L1220 397 L1226 408 L1212 408 Z" fill="#e8eaec"/>
<path d="M1225 440 L1300 440 L1307 561.5 L1218.6 421.6 Z" fill="#b59c72" opacity="0.8"/>
<path d="M1262 354 L1300 354 L1300 470 L1262 455 Z" fill="#9aa6b0" opacity="0.6"/>
<rect x="1228" y="354" width="22" height="36" fill="url(#blindsTop)"/>
<rect x="1270" y="354" width="34" height="36" fill="url(#blindsTop)"/>
<path d="M1220 354 L1228 354 L1226 428 L1220 420 Z" fill="#a89272"/>
<path d="M1250 354 L1266 354 L1262 470 L1248 455 Z" fill="#ab9370"/>
<path d="M1302 354 L1331 354 L1322.3 561.5 L1300.6 561.5 Z" fill="#2a2c30"/>
<path d="M1331 354 L1390 354 L1363.4 624.3 L1322.3 561.5 Z" fill="url(#door)"/>
<rect x="1324" y="354" width="6" height="96" fill="#8e9296"/>
<rect x="1344" y="354" width="7" height="96" fill="#5e6266"/>
<path d="M1323 419 L1345 419 L1345 423 L1323 423 Z" fill="#a0a4a8"/>
<!-- wood panel -->
<path d="M1386 354 L1392 354 L1363.4 624.3 L1358 618 Z" fill="#2a2b2e"/>
<path d="M1392 354 L1438 354 L1402 682.2 L1363.4 624.3 Z" fill="url(#wood)"/>
<path d="M1438 354 L1448 354 L1410 692 L1402 682.2 Z" fill="#2c2e31"/>
<!-- big blinds panel -->
<path d="M1447 354 L1582 354 L1504 806 L1465 806 L1409 690 Z" fill="url(#blinds)"/>
<path d="M1420 700 L1480 740 L1470 806 L1465 806 Z" fill="#b8a478" opacity="0.5"/>
<path d="M1447 354 L1582 354 L1550 560 L1430 500 Z" fill="#565c5e" opacity="0.25"/>
<!-- dark frame -->
<path d="M1581 354 L1597 354 L1520 806 L1503 806 Z" fill="#27292c"/>
<!-- right blinds -->
<path d="M1597 354 L1621 354 L1621 806 L1520 806 Z" fill="url(#blinds2)"/>
<!-- blue stripes -->
<path d="M1433 432 L1622 578 L1622 602 L1433 450 Z" fill="#2b2ea6"/>
<path d="M1433 446 L1622 596.5 L1622 598.5 L1433 448 Z" fill="#dfe0f2" opacity="0.8"/>
<path d="M1334 361 L1385 390 L1385 402 L1334 373 Z" fill="#2b2ea6"/>
<rect x="818" y="805" width="803" height="1" fill="#1d1d1d"/>
</svg>
<div class="ab" style="left:818px;top:378px;font-family:'Liberation Mono',monospace;font-size:20px;line-height:24px;color:#000;white-space:nowrap;letter-spacing:-1.5px;text-shadow:0 0 1px #fff">2023年12月13日 星期三 16:34:13</div>
<div class="ab" style="left:1402px;top:752px;font-size:19px;line-height:24px;color:#111;white-space:nowrap">走廊<span style="color:#fff;font-size:17px">2</span></div>
<div class="ab" style="left:1099px;top:826px;width:12px;height:12px;border-radius:6px;border:1px solid #c4c4c4;background:#fff"></div>
<div class="ab" style="left:1114px;top:825px;font-size:11px;color:#4a80d8;line-height:14px">截图</div>
<div class="ab" style="left:1147px;top:826px;width:12px;height:12px;border-radius:6px;border:3.5px solid #3f7fe6;background:#fff"></div>
<div class="ab" style="left:1161px;top:825px;font-size:11px;color:#4a80d8;line-height:14px">视频</div>
<div class="ab" style="left:1191px;top:820px;width:72px;height:27px;border:1px solid #5a8fe0;border-radius:3px;background:#fff;box-shadow:0 0 0 2px #c6d8f4;color:#3d74d0;font-size:11px;line-height:25px;text-align:center">重头播放</div>
<div class="ab" style="left:1272px;top:820px;width:71px;height:27px;border:1px solid #6f9de6;border-radius:3px;background:#fff;color:#3d74d0;font-size:11px;line-height:25px;text-align:center">暂停</div>
</body></html>
